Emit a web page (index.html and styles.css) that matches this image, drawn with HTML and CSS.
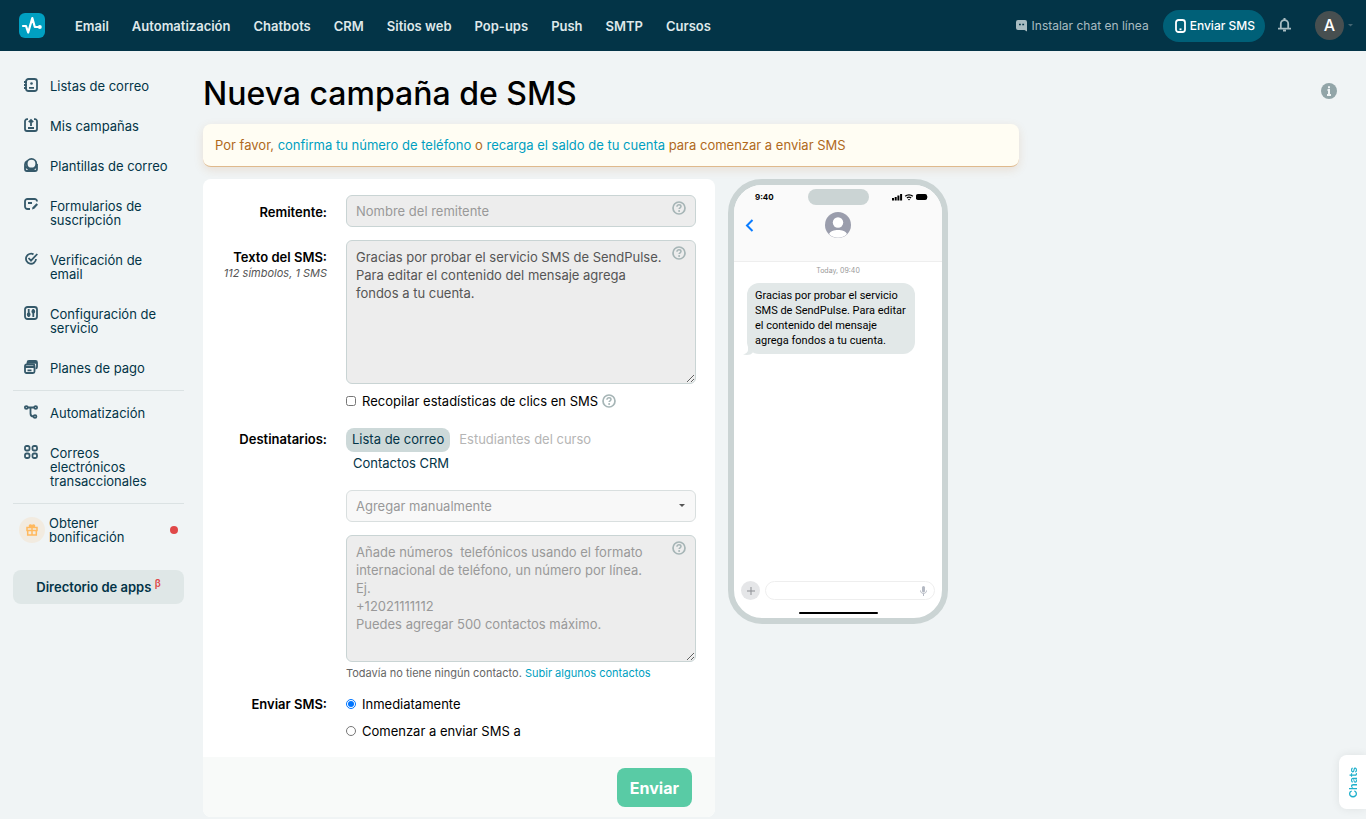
FILE: index.html
```html
<!DOCTYPE html>
<html lang="es">
<head>
<meta charset="UTF-8">
<meta name="viewport" content="width=device-width, initial-scale=1">
<title>Nueva campaña de SMS</title>
<link rel="stylesheet" href="styles.css">
</head>
<body>

<svg class="sprite" width="0" height="0" aria-hidden="true">
	<symbol id="help" viewBox="0 0 14 14">
		<circle cx="7" cy="7" r="6" fill="none" stroke="currentColor" stroke-width="1.7"/>
		<path d="M5 5.7C5 4.5 5.9 3.8 7 3.8s2 .7 2 1.7c0 1.3-1.9 1.3-1.9 2.6" fill="none" stroke="currentColor" stroke-width="1.5"/>
		<circle cx="7.1" cy="10" r="1" fill="currentColor"/>
	</symbol>
</svg>

<header class="header">
	<a class="logo" href="#" aria-label="SendPulse">
		<svg width="26" height="26" viewBox="0 0 26 26">
			<rect width="26" height="25" rx="6" fill="#009fc1"/>
			<path d="M4 13h3l2.2 6.5L13.3 5l2.5 9h5" fill="none" stroke="#fff" stroke-width="2.2" stroke-linejoin="round" stroke-linecap="round"/>
			<circle cx="20.8" cy="14" r="2" fill="#fff"/>
		</svg>
	</a>
	<nav class="menu">
		<a href="#">Email</a>
		<a href="#">Automatización</a>
		<a href="#">Chatbots</a>
		<a href="#">CRM</a>
		<a href="#">Sitios web</a>
		<a href="#">Pop-ups</a>
		<a href="#">Push</a>
		<a href="#">SMTP</a>
		<a href="#">Cursos</a>
	</nav>
	<div class="header-right">
		<a class="install" href="#">
			<svg width="11" height="12" viewBox="0 0 11 12"><path d="M2 0h7a2 2 0 0 1 2 2v9.5L8.5 10H2a2 2 0 0 1-2-2V2a2 2 0 0 1 2-2z" fill="currentColor"/><path d="M3 4.5h1.8M6.3 4.5h1.8" stroke="#033447" stroke-width="1.5"/></svg>
			Instalar chat en línea
		</a>
		<a class="send-sms" href="#">
			<svg width="11" height="14" viewBox="0 0 11 14"><rect x="1" y="1" width="9" height="12" rx="2.5" fill="none" stroke="currentColor" stroke-width="1.8"/><path d="M4.5 10.3h2" stroke="currentColor" stroke-width="1.8"/></svg>
			Enviar SMS
		</a>
		<button class="bell" type="button" aria-label="Notificaciones">
			<svg width="13" height="14" viewBox="0 0 13 14"><path d="M2.8 10.5V5.8a3.7 3.7 0 0 1 7.4 0v4.7M0 10.7h13" fill="none" stroke="currentColor" stroke-width="1.8"/><path d="M6.5 2.5V0M5 12.5h3" stroke="currentColor" stroke-width="2"/></svg>
		</button>
		<button class="user" type="button">
			<span class="avatar">A</span>
			<svg width="5" height="3" viewBox="0 0 5 3"><path d="M0 0h5L2.5 2.5z" fill="currentColor"/></svg>
		</button>
	</div>
</header>

<div class="page">
	<aside class="sidebar">
		<ul>
			<li><a href="#">
				<svg viewBox="0 0 14 14"><rect x="2" y="1" width="11" height="12" rx="2.5"/><path d="M0 4h3M0 7h3M0 10h3M5 9.8h5"/><circle cx="7.5" cy="5.5" r="1.3" class="fill"/></svg>
				<span>Listas de correo</span></a></li>
			<li><a href="#">
				<svg viewBox="0 0 14 14"><path d="M4 1.2H3a2 2 0 0 0-2 2V11a2 2 0 0 0 2 2h8a2 2 0 0 0 2-2V3.2a2 2 0 0 0-2-2h-1M7 8V2M4.8 4.2L7 2l2.2 2.2M4 10h6"/></svg>
				<span>Mis campañas</span></a></li>
			<li><a href="#">
				<svg viewBox="0 0 14 14"><circle cx="7.5" cy="5.7" r="4.8"/><path d="M3 3C1.5 3.7 1 5 1 6.5V11a2 2 0 0 0 2 2h8a2 2 0 0 0 2-2V6M1.2 8.2L4.5 11h5.3l3-3"/></svg>
				<span>Plantillas de correo</span></a></li>
			<li><a href="#">
				<svg viewBox="0 0 14 14"><path d="M13 3.5A2.5 2.5 0 0 0 10.5 1h-7A2.5 2.5 0 0 0 1 3.5v5A2.5 2.5 0 0 0 3.500 11H6M4 5h4"/><path d="M8 11.5l.6-2.3L12.500 5.300 14 6.800 10.300 10.800z" class="fill"/></svg>
				<span>Formularios de suscripción</span></a></li>
			<li><a href="#">
				<svg viewBox="0 0 14 14"><path d="M9.5 2.400A5 5 0 1 0 12 7M4.500 6L7 8.700l6.300-6.700"/></svg>
				<span>Verificación de email</span></a></li>
			<li><a href="#">
				<svg viewBox="0 0 14 14"><rect x="1" y="1" width="12" height="12" rx="2.5"/><path d="M4.7 3v8M9.3 3v8"/><circle cx="4.7" cy="8.5" r="1"/><circle cx="9.3" cy="5.5" r="1"/></svg>
				<span>Configuración de servicio</span></a></li>
			<li><a href="#">
				<svg viewBox="0 0 14 14"><rect x="1" y="4.5" width="9.5" height="8.5" rx="1.5"/><path d="M3.5 4V2.5A1.5 1.5 0 0 1 5 1h6.500A1.5 1.5 0 0 1 13 2.500V7a1.5 1.5 0 0 1-1.5 1.5M1 7h9.500M3.500 10.300h4M4 2.800h9"/></svg>
				<span>Planes de pago</span></a></li>
		</ul>
		<ul>
			<li><a href="#">
				<svg viewBox="0 0 14 14"><circle cx="2.3" cy="2.5" r="1.4"/><circle cx="11.7" cy="2.5" r="1.4"/><circle cx="11" cy="11.5" r="1.4"/><path d="M3.7 2.500h6.600M6.500 2.500v6a3 3 0 0 0 3 3"/></svg>
				<span>Automatización</span></a></li>
			<li><a href="#">
				<svg viewBox="0 0 14 14"><rect x="1" y="1" width="4.5" height="4.5" rx="1.5"/><rect x="8.5" y="1" width="4.5" height="4.5" rx="1.5"/><rect x="1" y="8.5" width="4.5" height="4.5" rx="1.5"/><rect x="8.5" y="8.5" width="4.5" height="4.5" rx="1.5"/></svg>
				<span>Correos electrónicos transaccionales</span></a></li>
		</ul>
		<a class="bonus" href="#">
			<i><svg width="12" height="12" viewBox="0 0 12 12"><path d="M1 3.500h10V6.500H1zM1.700 6.500V11h8.600V6.500M6 3.500V11M6 3.500C3 3.500 3 1 4.300 1S6 2.500 6 3.500C6 2.500 6.500 1 7.700 1S9 3.500 6 3.500" fill="none" stroke="currentColor" stroke-width="1.5"/></svg></i>
			<span>Obtener bonificación</span>
			<b></b>
		</a>
		<a class="apps" href="#">Directorio de apps <sup>β</sup></a>
	</aside>

	<main class="content">
		<div class="title">
			<h1>Nueva campaña de SMS</h1>
			<a href="#" aria-label="Información">
				<svg width="16" height="16" viewBox="0 0 16 16"><circle cx="8" cy="8" r="8" fill="#92a5a8"/><path d="M6.500 7H8v5M6 12h4M7 4.300h2" fill="none" stroke="#f0f4f5" stroke-width="2"/></svg>
			</a>
		</div>

		<div class="alert">
			Por favor, <a href="#">confirma tu número de teléfono</a> o <a href="#">recarga el saldo de tu cuenta</a> para comenzar a enviar SMS
		</div>

		<div class="row">
			<form class="panel" action="">
				<div class="panel-body">
					<label class="name" for="sender">Remitente:</label>
					<div class="control">
						<input id="sender" type="text" placeholder="Nombre del remitente" disabled>
						<svg class="help"><use href="#help"/></svg>
					</div>

					<label class="name" for="text">Texto del SMS: <em>112 símbolos, 1 SMS</em></label>
					<div class="control">
						<textarea id="text" class="sms-text" disabled>Gracias por probar el servicio SMS de SendPulse. Para editar el contenido del mensaje agrega fondos a tu cuenta.</textarea>
						<svg class="help"><use href="#help"/></svg>
						<label class="check"><input type="checkbox"> Recopilar estadísticas de clics en SMS <svg><use href="#help"/></svg></label>
					</div>

					<span class="name recipients">Destinatarios:</span>
					<div class="control">
						<div class="tabs">
							<button class="selected" type="button">Lista de correo</button>
							<button type="button" disabled>Estudiantes del curso</button>
							<button type="button">Contactos CRM</button>
						</div>
						<div class="select">
							<select aria-label="Lista de correo">
								<option>Agregar manualmente</option>
							</select>
							<i></i>
						</div>
					</div>

					<div class="control wide">
						<textarea class="phones" aria-label="Números telefónicos" disabled placeholder="Añade números  telefónicos usando el formato internacional de teléfono, un número por línea.&#10;Ej.&#10;+12021111112&#10;Puedes agregar 500 contactos máximo."></textarea>
						<svg class="help"><use href="#help"/></svg>
						<p class="note">Todavía no tiene ningún contacto. <a href="#">Subir algunos contactos</a></p>
					</div>

					<span class="name when">Enviar SMS:</span>
					<div class="control radios">
						<label><input type="radio" name="when" checked> Inmediatamente</label>
						<label><input type="radio" name="when"> Comenzar a enviar SMS a</label>
					</div>
				</div>
				<div class="panel-footer">
					<button class="submit" type="submit">Enviar</button>
				</div>
			</form>

			<div class="phone">
				<div class="phone-top">
					<div class="status">
						<span>9:40</span>
						<i></i>
						<svg width="36" height="8" viewBox="0 0 36 8">
							<path d="M0 5h2v2.500H0zM2.700 4h2v3.500h-2zM5.400 2.500h2v5h-2zM8.100 1h2v6.500h-2z"/>
							<path d="M13.200 3.300c2-2 5.600-2 7.600 0M14.900 5.100c1.200-1.100 3-1.100 4.200 0" fill="none" stroke="#000" stroke-width="1.3"/><path d="M15.800 6l1.200 1.500L18.200 6z"/>
							<rect x="24" y="1" width="11" height="6" rx="1.8"/><path d="M35.300 3h.7v2h-.7z" fill="#999"/>
						</svg>
					</div>
					<div class="contact">
						<svg width="9" height="13" viewBox="0 0 9 13"><path d="M7.500 1L2 6.500 7.500 12" fill="none" stroke="#0a7cff" stroke-width="2"/></svg>
						<svg width="26" height="26" viewBox="0 0 26 26"><circle cx="13" cy="13" r="13" fill="#9a9dac"/><circle cx="13" cy="10.5" r="5.2" fill="#fff"/><path d="M4 22c2-5.500 16-5.500 18 0a12.500 12.500 0 0 1-18 0z" fill="#fff"/></svg>
					</div>
				</div>
				<div class="date">Today, 09:40</div>
				<div class="bubble">Gracias por probar el servicio SMS de SendPulse. Para editar el contenido del mensaje agrega fondos a tu cuenta.
					<svg width="10" height="10" viewBox="0 0 10 10"><path d="M5 0v5c0 2-2 4-5 4.500 4 1 8 .5 10-2z" fill="#e2e8e8"/></svg>
				</div>
				<div class="compose">
					<span class="plus"><svg width="8" height="8" viewBox="0 0 8 8"><path d="M4 0v8M0 4h8" stroke="#8d8f94"/></svg></span>
					<span class="line"><svg width="7" height="10" viewBox="0 0 7 10"><rect x="2" width="3" height="6.5" rx="1.5" fill="#b4b9c3"/><path d="M.5 4.500c0 4 6 4 6 0M3.500 7.500V10" fill="none" stroke="#b4b9c3"/></svg></span>
				</div>
				<div class="home"></div>
			</div>
		</div>
	</main>
</div>

<button class="chats" type="button">Chats</button>

</body>
</html>
```
FILE: styles.css
```css
* {
	box-sizing: border-box;
}

body {
	margin: 0;
	background: #f0f4f5;
	color: #000;
	font: 13px/18px Inter, "Liberation Sans", sans-serif;
}

a {
	color: #009fc1;
	text-decoration: none;
}

button, input, select, textarea {
	font: inherit;
}

button {
	border: 0;
	background: none;
	cursor: pointer;
}

ul {
	margin: 0;
	padding: 0;
	list-style: none;
}

.sprite {
	position: absolute;
}

/* header */
.header {
	display: flex;
	align-items: center;
	height: 51px;
	padding: 0 13px 0 19px;
	background: #033447;
}

.logo svg, .header svg {
	display: block;
}

.menu {
	display: flex;
	gap: 23px;
	margin-left: 30px;
}

.menu a {
	color: #dfe8ea;
	font-weight: 600;
}

.header-right {
	display: flex;
	align-items: center;
	margin-left: auto;
}

.install {
	display: flex;
	align-items: center;
	gap: 5px;
	margin-right: 14px;
	color: #a9bcc2;
	font-size: 12px;
}

.send-sms {
	display: flex;
	align-items: center;
	gap: 4px;
	height: 32px;
	padding: 0 10px 0 12px;
	border-radius: 16px;
	background: #006078;
	color: #fff;
	font-size: 12px;
	font-weight: 500;
}

.bell {
	margin: 0 24px 0 13px;
	padding: 0 0 2px;
	color: #a9bcc2;
}

.user {
	display: flex;
	align-items: center;
	gap: 4px;
	padding: 0;
	color: #456673;
}

.avatar {
	width: 29px;
	border-radius: 50%;
	background: #474f50;
	color: #fff;
	font-size: 16px;
	font-weight: 500;
	line-height: 29px;
	text-align: center;
}

/* sidebar */
.page {
	display: flex;
}

.sidebar {
	flex: 0 0 203px;
	padding: 15px 19px 0 13px;
	line-height: 14px;
}

.sidebar ul {
	padding-bottom: 2px;
	margin-bottom: 2px;
	border-bottom: 1px solid #dbe2e3;
}

.sidebar li a {
	display: flex;
	gap: 12px;
	padding: 13px 10px 13px 11px;
	color: #033447;
}

.sidebar li svg {
	flex: none;
	width: 14px;
	height: 14px;
	margin-top: -1px;
	fill: none;
	stroke: #35596a;
	stroke-width: 1.8;
}

.sidebar li .fill {
	fill: #35596a;
	stroke: none;
}

.bonus {
	display: flex;
	align-items: center;
	gap: 4px;
	padding: 10px 6px;
	color: #033447;
}

.bonus i {
	display: flex;
	flex: none;
	align-items: center;
	justify-content: center;
	width: 26px;
	height: 26px;
	border-radius: 50%;
	background: #f2ebe0;
	color: #ffb95e;
}

.bonus span {
	width: 90px;
}

.bonus b {
	width: 8px;
	height: 8px;
	margin-left: auto;
	border-radius: 50%;
	background: #e04848;
}

.apps {
	display: block;
	margin-top: 16px;
	border-radius: 8px;
	background: #dfe7e7;
	color: #033447;
	font-weight: 600;
	line-height: 34px;
	text-align: center;
}

.apps sup {
	color: #e04848;
	font-size: 10px;
	line-height: 10px;
}

/* content */
.content {
	flex: 1;
	min-width: 0;
	padding-bottom: 2px;
}

.title {
	display: flex;
	align-items: center;
	justify-content: space-between;
	padding: 20px 29px 8px 0;
}

.title h1 {
	margin: 0;
	font-size: 32px;
	font-weight: 500;
	line-height: 45px;
}

.title a {
	padding-bottom: 6px;
}

.title svg {
	display: block;
}

.alert {
	max-width: 816px;
	padding: 12px;
	border-bottom: 1px solid #dfb98c;
	border-radius: 8px;
	background: #fffdf3;
	box-shadow: 0 3px 10px rgba(190, 110, 40, .15);
	color: #b0691c;
}

.row {
	display: flex;
	align-items: flex-start;
	gap: 13px;
	margin-top: 12px;
}

.panel {
	flex: 0 1 512px;
	overflow: hidden;
	border-radius: 8px;
	background: #fff;
}

.panel-body {
	display: grid;
	grid-template-columns: 124px 1fr;
	gap: 13px 19px;
	padding: 16px 19px 17px 0;
}

.name {
	padding-top: 8px;
	font-weight: 600;
	text-align: right;
}

.name em {
	display: block;
	color: #555;
	font-size: 11px;
	font-weight: 400;
	line-height: 14px;
}

.recipients {
	padding-top: 2px;
}

.when {
	padding-top: 0;
}

.control {
	position: relative;
}

.wide {
	grid-column: 2;
}

.control input[type=text], .control textarea, .control select {
	display: block;
	width: 100%;
	padding: 6px 9px;
	border: 1px solid #c9d4d4;
	border-radius: 6px;
	background: #ededed;
	color: #555;
}

.control input[type=text] {
	height: 32px;
}

.control textarea {
	padding: 7px 32px 7px 9px;
}

.control .sms-text {
	height: 144px;
}

.control .phones {
	height: 127px;
}

::placeholder {
	color: #999;
}

.select {
	position: relative;
	margin-top: 14px;
}

.control select {
	height: 32px;
	appearance: none;
	border-color: #d9dfdf;
	background: #f8f8f8;
	color: #999;
}

.select i {
	position: absolute;
	top: 14px;
	right: 11px;
	border: 3px solid transparent;
	border-top-color: #555;
	border-bottom: 0;
	pointer-events: none;
}

.control svg {
	width: 14px;
	height: 14px;
	color: #a6b5b6;
}

.control .help {
	position: absolute;
	top: 6px;
	right: 10px;
}

.check, .radios label {
	display: flex;
	align-items: center;
	gap: 6px;
}

.check {
	gap: 4px;
	padding: 8px 0 5px;
}

.control input[type=checkbox], .control input[type=radio] {
	width: 10px;
	height: 10px;
	margin: 0;
}

.control input[type=checkbox] {
	margin-right: 2px;
}

.tabs {
	display: flex;
	flex-wrap: wrap;
	gap: 0 2px;
	padding-right: 70px;
}

.tabs button {
	height: 24px;
	padding: 0 7px 2px;
	color: #033447;
}

.tabs .selected {
	padding: 0 6px 2px;
	border-radius: 8px;
	background: #cdd9d9;
}

.tabs button:disabled {
	color: #b5b5b5;
}

.note {
	margin: 2px 0 0;
	color: #666;
	font-size: 11px;
}

.radios label + label {
	margin-top: 9px;
}

.panel-footer {
	display: flex;
	justify-content: flex-end;
	padding: 11px 23px 10px;
	background: #f8faf9;
}

.submit {
	height: 39px;
	padding: 0 13px;
	border-radius: 8px;
	background: #59cba5;
	color: #fff;
	font-size: 16px;
	font-weight: 700;
}

/* phone */
.phone {
	display: flex;
	flex: 0 0 220px;
	flex-direction: column;
	min-height: 445px;
	overflow: hidden;
	border: 6px solid #cbd4d4;
	border-radius: 34px;
	background: #fff;
}

.phone-top {
	height: 77px;
	border-bottom: 1px solid #eee;
	background: #fafafa;
}

.status {
	display: grid;
	grid-template-columns: 1fr 61px 1fr;
	align-items: center;
	padding: 4px 14px 0;
	font-size: 8px;
	font-weight: 700;
	line-height: 16px;
}

.status span {
	padding-left: 7px;
}

.status i {
	height: 16px;
	border-radius: 8px;
	background: #cbd4d4;
}

.status svg {
	justify-self: end;
}

.contact {
	display: grid;
	grid-template-columns: 1fr 26px 1fr;
	align-items: center;
	padding: 7px 11px 0;
}

.date {
	margin-top: 3px;
	color: #999;
	font-size: 7px;
	line-height: 12px;
	text-align: center;
}

.bubble {
	position: relative;
	width: 168px;
	margin: 6px 0 0 13px;
	padding: 5px 8px 6px;
	border-radius: 12px;
	background: #e2e8e8;
	font: 11px/15px Roboto, "Liberation Sans", sans-serif;
}

.bubble svg {
	position: absolute;
	bottom: -1px;
	left: -4px;
}

.compose {
	display: flex;
	gap: 5px;
	margin: auto 7px 12px;
}

.plus, .line {
	display: flex;
	align-items: center;
	justify-content: center;
	width: 19px;
	height: 19px;
	border-radius: 10px;
	background: #e5e6e8;
}

.line {
	flex: 1;
	justify-content: flex-end;
	padding-right: 7px;
	border: 1px solid #eee;
	background: none;
}

.home {
	width: 79px;
	height: 2px;
	margin: 0 auto 4px;
	border-radius: 2px;
	background: #000;
}

/* chat tab on the window edge */
.chats {
	position: fixed;
	right: 0;
	bottom: 10px;
	width: 27px;
	height: 54px;
	padding: 0;
	border-radius: 8px 0 0 8px;
	background: #fff;
	box-shadow: 0 0 10px rgba(0, 0, 0, .08);
	color: #1fb0cc;
	font-size: 11px;
	font-weight: 600;
	writing-mode: sideways-lr;
}
```
